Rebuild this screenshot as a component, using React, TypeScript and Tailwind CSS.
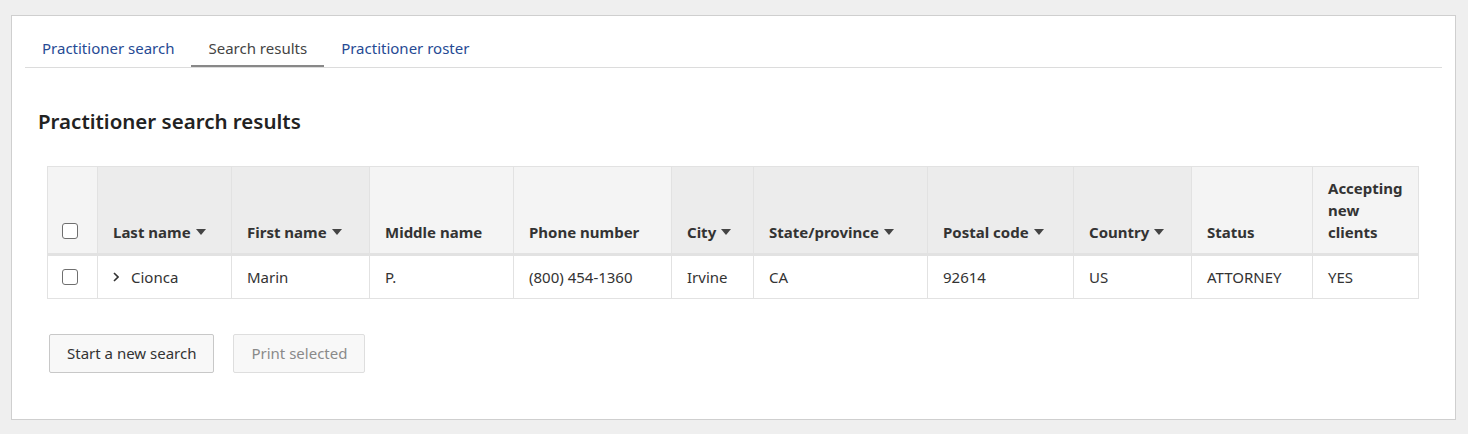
import React from "react";

type Col = { label: React.ReactNode; key: string; width: number; sortable?: boolean };

const cols: Col[] = [
  { key: "last", label: "Last name", width: 134, sortable: true },
  { key: "first", label: "First name", width: 138, sortable: true },
  { key: "middle", label: "Middle name", width: 144 },
  { key: "phone", label: "Phone number", width: 158 },
  { key: "city", label: "City", width: 82, sortable: true },
  { key: "state", label: "State/province", width: 174, sortable: true },
  { key: "postal", label: "Postal code", width: 146, sortable: true },
  { key: "country", label: "Country", width: 118, sortable: true },
  { key: "status", label: "Status", width: 121 },
  {
    key: "accepting",
    label: (
      <>
        Accepting
        <br />
        new
        <br />
        clients
      </>
    ),
    width: 106,
  },
];

const row = ["Cionca", "Marin", "P.", "(800) 454-1360", "Irvine", "CA", "92614", "US", "ATTORNEY", "YES"];

function Caret() {
  return (
    <svg width="10" height="6" viewBox="0 0 10 6" className="inline-block ml-[5px] mb-[3px]">
      <path d="M0 0h10L5 6z" fill="#444" />
    </svg>
  );
}

function Checkbox() {
  return <span className="block w-[16px] h-[16px] rounded-[3px] border border-[#6f6f6f] bg-white" />;
}

export default function App() {
  const tabs = ["Practitioner search", "Search results", "Practitioner roster"];
  return (
    <div
      className="min-h-[434px] bg-[#efefef] pt-[15px] pl-[11px] pr-[12px] pb-[14px] text-[#333]"
      style={{ fontFamily: '"Noto Sans", "Open Sans", sans-serif' }}
    >
      <div className="bg-white border border-[#cfcfcf] h-[405px] pl-[14px] pr-[13px] pt-[20px]">
        {/* Tabs */}
        <div className="flex border-b border-[#dcdcdc] -ml-px">
          {tabs.map((t, i) => (
            <div
              key={t}
              className={
                "px-[17px] h-[31px] text-[15px] leading-[24px] " +
                (i === 1 ? "border-b-2 border-[#888] text-[#444] -mb-px" : "text-[#264a94]")
              }
            >
              {t}
            </div>
          ))}
        </div>

        <h1 className="mt-[38px] ml-[12px] text-[20.5px] font-semibold text-[#222] leading-[30px]">
          Practitioner search results
        </h1>

        {/* Results table */}
        <div className="mt-[30px] ml-[21px]">
          <table className="table-fixed border-collapse w-[1371px] text-[15px]">
            <colgroup>
              <col style={{ width: 50 }} />
              {cols.map((c) => (
                <col key={c.key} style={{ width: c.width }} />
              ))}
            </colgroup>
            <thead>
              <tr className="h-[88px] border-b-[3px] border-[#e2e2e2]">
                <th className="border border-[#e2e2e2] bg-[#f4f4f4] align-bottom pb-[14px] pl-[14px]">
                  <Checkbox />
                </th>
                {cols.map((c) => (
                  <th
                    key={c.key}
                    className={
                      "border border-[#e2e2e2] align-bottom text-left font-bold text-[#333] leading-[22px] pl-[15px] pr-[6px] pb-[10px] " +
                      (c.sortable ? "bg-[#ececec]" : "bg-[#f4f4f4]")
                    }
                  >
                    {c.label}
                    {c.sortable && <Caret />}
                  </th>
                ))}
              </tr>
            </thead>
            <tbody>
              <tr className="h-[44px]">
                <td className="border border-[#e2e2e2] pl-[14px]">
                  <Checkbox />
                </td>
                {row.map((v, i) => (
                  <td key={i} className="border border-[#e2e2e2] pl-[15px] text-[#333]">
                    {i === 0 ? (
                      <span className="flex items-center">
                        <svg width="6" height="10" viewBox="0 0 6 10" className="mr-[12px]">
                          <path d="M1 1l4 4-4 4" stroke="#333" strokeWidth="1.6" fill="none" />
                        </svg>
                        {v}
                      </span>
                    ) : (
                      v
                    )}
                  </td>
                ))}
              </tr>
            </tbody>
          </table>
        </div>

        {/* Actions */}
        <div className="flex gap-[19px] mt-[35px] ml-[23px]">
          <button className="h-[39px] px-[17px] bg-[#f8f8f8] border border-[#c8c8c8] rounded-[2px] text-[15px] text-[#333]">
            Start a new search
          </button>
          <button
            disabled
            className="h-[39px] px-[17px] bg-[#f8f8f8] border border-[#dedede] rounded-[2px] text-[15px] text-[#8a8a8a]"
          >
            Print selected
          </button>
        </div>
      </div>
    </div>
  );
}
